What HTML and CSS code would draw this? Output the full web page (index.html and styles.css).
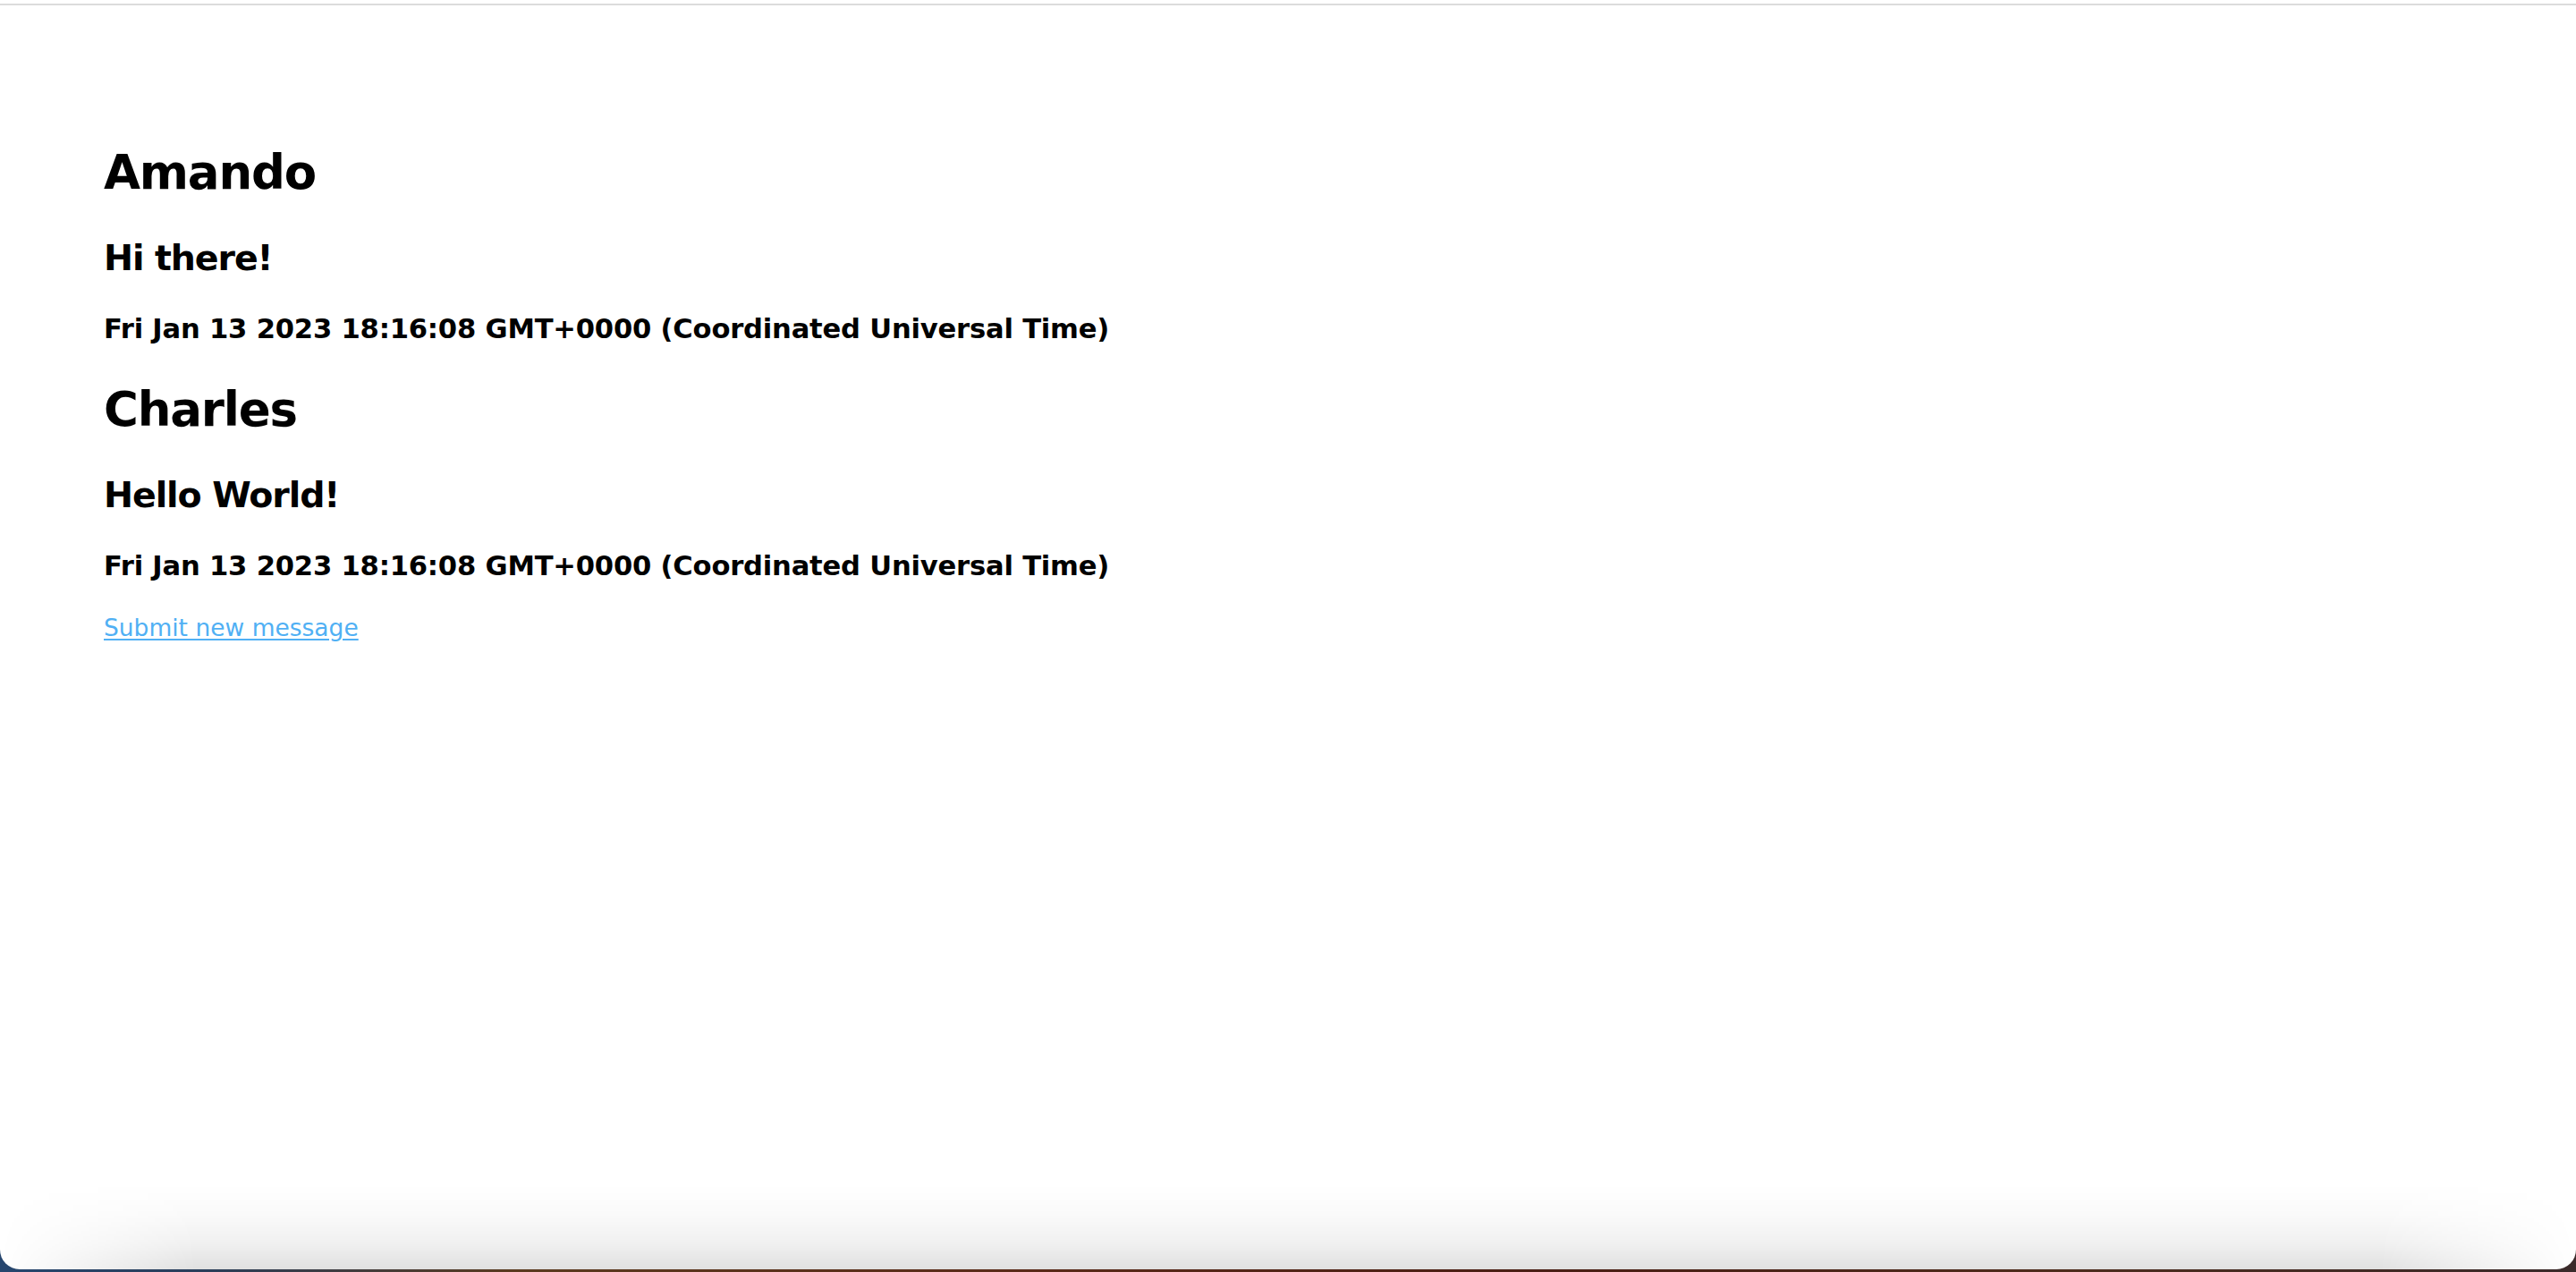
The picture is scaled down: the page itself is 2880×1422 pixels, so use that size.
FILE: index.html
```html
<!DOCTYPE html>
<html lang="en">
<head>
<meta charset="utf-8">
<title>Messages</title>
<link rel="stylesheet" href="styles.css">
</head>
<body>
<div class="window">
  <div class="topline"></div>
  <main class="content">
    <section class="message">
      <h1 class="author">Amando</h1>
      <h2 class="text">Hi there!</h2>
      <h4 class="date">Fri Jan 13 2023 18:16:08 GMT+0000 (Coordinated Universal Time)</h4>
    </section>
    <section class="message">
      <h1 class="author">Charles</h1>
      <h2 class="text">Hello World!</h2>
      <h4 class="date">Fri Jan 13 2023 18:16:08 GMT+0000 (Coordinated Universal Time)</h4>
    </section>
    <a class="new-link" href="#">Submit new message</a>
  </main>
  <div class="shade"></div>
</div>
</body>
</html>
```

FILE: styles.css
```css
html, body {
  margin: 0;
  padding: 0;
}
html {
  background: linear-gradient(to right, #26466e 0, #2a3e5a 8%, #5a3a1e 20%, #5a2a18 40%, #4a1e14 60%, #4e2c1c 80%, #3a2a2a 100%);
}
body {
  height: 1422px;
  overflow: hidden;
  font-family: "DejaVu Sans", "Liberation Sans", sans-serif;
  color: #000;
}
.window {
  position: relative;
  height: 1419px;
  background: #fff;
  border-radius: 0 0 22px 22px;
  overflow: hidden;
  display: flex;
  flex-direction: column;
}
.topline {
  margin-top: 4px;
  height: 2px;
  background: #dcdcdc;
}
.content {
  padding: 153px 0 0 116px;
  display: flex;
  flex-direction: column;
  align-items: flex-start;
}
.message {
  display: flex;
  flex-direction: column;
  align-items: flex-start;
}
.author {
  margin: 0;
  font-size: 53px;
  line-height: 68px;
  font-weight: bold;
  letter-spacing: -1.2px;
}
.text {
  margin: 36px 0 0;
  font-size: 39.5px;
  line-height: 51px;
  font-weight: bold;
  letter-spacing: -1.1px;
}
.date {
  margin: 36px 0 38px;
  font-size: 30.6px;
  line-height: 36px;
  font-weight: bold;
  letter-spacing: -0.2px;
}
.new-link {
  margin-top: -4px;
  font-size: 26.5px;
  line-height: 34px;
  color: #50b0f4;
  text-decoration: underline;
  text-underline-offset: 3px;
}
.shade {
  position: absolute;
  left: 0;
  right: 0;
  bottom: 0;
  height: 95px;
  background: linear-gradient(to bottom, rgba(0,0,0,0) 0%, rgba(0,0,0,0.02) 35%, rgba(0,0,0,0.06) 70%, rgba(0,0,0,0.12) 100%);
  -webkit-mask-image: linear-gradient(to right, transparent 0, #000 220px, #000 calc(100% - 220px), transparent 100%);
  mask-image: linear-gradient(to right, transparent 0, #000 220px, #000 calc(100% - 220px), transparent 100%);
  pointer-events: none;
}
```
